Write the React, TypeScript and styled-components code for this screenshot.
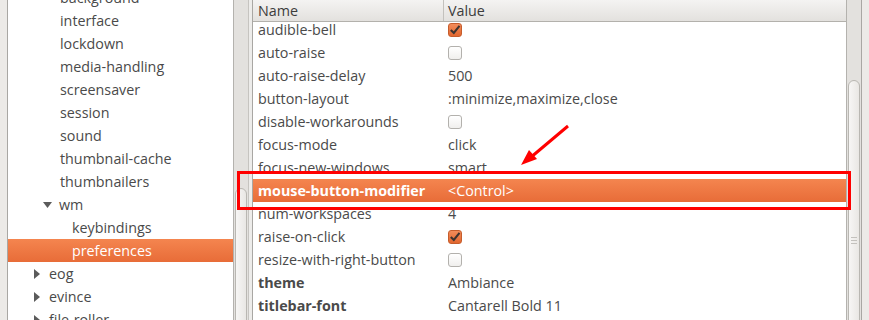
import React from 'react'
import styled, { createGlobalStyle } from 'styled-components'

interface TreeItem {
  label: string
  indent: number
  expander?: 'open' | 'closed'
  selected?: boolean
}

interface KeyItem {
  name: string
  value: string | boolean
  bold?: boolean
  selected?: boolean
}

const treeItems: TreeItem[] = [
  { label: 'background', indent: 52 },
  { label: 'interface', indent: 52 },
  { label: 'lockdown', indent: 52 },
  { label: 'media-handling', indent: 52 },
  { label: 'screensaver', indent: 52 },
  { label: 'session', indent: 52 },
  { label: 'sound', indent: 52 },
  { label: 'thumbnail-cache', indent: 52 },
  { label: 'thumbnailers', indent: 52 },
  { label: 'wm', indent: 35, expander: 'open' },
  { label: 'keybindings', indent: 64 },
  { label: 'preferences', indent: 64, selected: true },
  { label: 'eog', indent: 25, expander: 'closed' },
  { label: 'evince', indent: 25, expander: 'closed' },
  { label: 'file-roller', indent: 25, expander: 'closed' },
]

const keys: KeyItem[] = [
  { name: 'audible-bell', value: true },
  { name: 'auto-raise', value: false },
  { name: 'auto-raise-delay', value: '500' },
  { name: 'button-layout', value: ':minimize,maximize,close' },
  { name: 'disable-workarounds', value: false },
  { name: 'focus-mode', value: 'click' },
  { name: 'focus-new-windows', value: 'smart' },
  { name: 'mouse-button-modifier', value: '<Control>', bold: true, selected: true },
  { name: 'num-workspaces', value: '4' },
  { name: 'raise-on-click', value: true },
  { name: 'resize-with-right-button', value: false },
  { name: 'theme', value: 'Ambiance', bold: true },
  { name: 'titlebar-font', value: 'Cantarell Bold 11', bold: true },
  { name: 'titlebar-uses-system-font', value: false },
]

const GlobalStyle = createGlobalStyle`
  html, body {
    margin:0;
    padding:0;
    background:#f2f1f0;
  }
  body{
    font-family:"Open Sans", "DejaVu Sans", sans-serif;
  }
`

const Expander = ({ open }: { open: boolean }) => (
  <ExpanderBox>
    {open ? (
      <svg width="10" height="8" viewBox="0 0 10 8">
        <polygon points="0,1 9,1 4.5,7" fill="#5b5b5b" />
      </svg>
    ) : (
      <svg width="8" height="10" viewBox="0 0 8 10">
        <polygon points="1,0 7,5 1,10" fill="#5b5b5b" />
      </svg>
    )}
  </ExpanderBox>
)

const CheckBox = ({ checked }: { checked: boolean }) => (
  <Check $checked={checked}>
    {checked && (
      <svg width="14" height="14" viewBox="0 0 14 14">
        <path d="M2.8 7 L5.8 10 L11.5 2.8" stroke="#3e3430" strokeWidth="2.1" fill="none" />
      </svg>
    )}
  </Check>
)

const App = () => {
  return (
    <Window>
      <GlobalStyle />
      <FrameEdge />
      <TreePane>
        <TreeList>
          {treeItems.map((item) => (
            <TreeRow key={item.label} $indent={item.indent} $selected={!!item.selected}>
              {item.expander && <Expander open={item.expander === 'open'} />}
              {item.label}
            </TreeRow>
          ))}
        </TreeList>
      </TreePane>
      <ScrollTrough>
        <ScrollThumb $top={188} />
      </ScrollTrough>
      <PaneHandle />
      <KeysPane>
        <Header>
          <HeaderCell>Name</HeaderCell>
          <HeaderCell $divider>Value</HeaderCell>
        </Header>
        <KeysBody>
          <KeysList>
            {keys.map((k) => (
              <KeyRow key={k.name} $selected={!!k.selected}>
                <NameCell $bold={!!k.bold}>{k.name}</NameCell>
                <ValueCell>
                  {typeof k.value === 'boolean' ? <CheckBox checked={k.value} /> : k.value}
                </ValueCell>
              </KeyRow>
            ))}
          </KeysList>
        </KeysBody>
      </KeysPane>
      <ScrollTrough $right>
        <ScrollThumb $top={80}>
          <Grip />
        </ScrollThumb>
      </ScrollTrough>
      <FrameEdge $right />
      <HighlightBox />
      <ArrowMark width="869" height="320" viewBox="0 0 869 320">
        <line x1="568" y1="126" x2="530" y2="158" stroke="#ff0000" strokeWidth="3" />
        <polygon points="521,165 529,150 537,159" fill="#ff0000" />
      </ArrowMark>
    </Window>
  )
}

const Window = styled.div`
  position:relative;
  display:flex;
  width:869px;
  height:320px;
  overflow:hidden;
  background:#f2f1f0;
  color:#4a4a4a;
  font-size:14.3px;
`
const FrameEdge = styled.div<{ $right?: boolean }>`
  flex:none;
  width:7px;
  background:#eceae7;
  ${(p) => (p.$right ? 'border-left:1px solid #a9a7a3;' : 'border-right:1px solid #a9a7a3;')}
`
const TreePane = styled.div`
  flex:none;
  width:225px;
  background:#fff;
  overflow:hidden;
`
const TreeList = styled.div`
  margin-top:-14px;
`
const TreeRow = styled.div<{ $indent: number; $selected: boolean }>`
  display:flex;
  align-items:center;
  height:23px;
  padding-left:${(p) => p.$indent}px;
  white-space:nowrap;
  color:${(p) => (p.$selected ? '#fff' : '#4a4a4a')};
  background:${(p) => (p.$selected ? 'linear-gradient(#f4854f, #e86c38)' : 'transparent')};
`
const ExpanderBox = styled.span`
  display:flex;
  align-items:center;
  width:16px;
  height:100%;
`
const ScrollTrough = styled.div<{ $right?: boolean }>`
  position:relative;
  flex:none;
  width:14px;
  background:#e3e1de;
  border-left:1px solid #b4b2ae;
  ${(p) => (p.$right ? '' : 'border-right:1px solid #c6c4c0;')}
`
const ScrollThumb = styled.div<{ $top: number }>`
  margin:${(p) => p.$top}px 1px 0 1px;
  height:calc(100% + 20px);
  border:1px solid #b9b7b2;
  border-radius:6px 6px 0 0;
  background:linear-gradient(90deg, #f7f6f5, #e9e7e4);
  box-sizing:border-box;
  display:flex;
  justify-content:center;
  padding-top:156px;
`
const Grip = styled.div`
  width:6px;
  height:7px;
  background:repeating-linear-gradient(#c3c1bd 0 1px, transparent 1px 3px);
`
const PaneHandle = styled.div`
  flex:none;
  width:3px;
  background:#edecea;
  border-right:1px solid #a9a7a3;
`
const KeysPane = styled.div`
  flex:1;
  display:flex;
  flex-direction:column;
  background:#fff;
  min-width:0;
`
const Header = styled.div`
  display:grid;
  grid-template-columns:190px 1fr;
  height:21px;
  border-bottom:1px solid #b3b1ac;
  background:linear-gradient(#f4f3f2, #e3e1de);
`
const HeaderCell = styled.div<{ $divider?: boolean }>`
  display:flex;
  align-items:center;
  padding-left:${(p) => (p.$divider ? 4 : 5)}px;
  color:#3c3c3c;
  ${(p) => (p.$divider ? 'border-left:1px solid #c3c1bd;' : '')}
`
const KeysBody = styled.div`
  flex:1;
  overflow:hidden;
`
const KeysList = styled.div`
  margin-top:-4px;
`
const KeyRow = styled.div<{ $selected: boolean }>`
  display:grid;
  grid-template-columns:190px 1fr;
  height:23px;
  align-items:center;
  white-space:nowrap;
  color:${(p) => (p.$selected ? '#fff' : '#4a4a4a')};
  background:${(p) => (p.$selected ? 'linear-gradient(#f4854f, #e86c38)' : 'transparent')};
`
const NameCell = styled.div<{ $bold: boolean }>`
  padding-left:5px;
  font-weight:${(p) => (p.$bold ? 700 : 400)};
`
const ValueCell = styled.div`
  display:flex;
  align-items:center;
  padding-left:5px;
`
const Check = styled.span<{ $checked: boolean }>`
  display:inline-flex;
  width:14px;
  height:14px;
  box-sizing:border-box;
  border-radius:3px;
  border:1px solid ${(p) => (p.$checked ? '#c65d2c' : '#b3b1ad')};
  background:${(p) => (p.$checked ? 'linear-gradient(#f28c5a, #e2672f)' : 'linear-gradient(#ffffff, #f0efed)')};
  svg{
    margin:-1px;
  }
`
const HighlightBox = styled.div`
  position:absolute;
  left:237px;
  top:171px;
  width:614px;
  height:39px;
  box-sizing:border-box;
  border:3px solid #ff0000;
  pointer-events:none;
`
const ArrowMark = styled.svg`
  position:absolute;
  left:0;
  top:0;
  pointer-events:none;
`

export default App
